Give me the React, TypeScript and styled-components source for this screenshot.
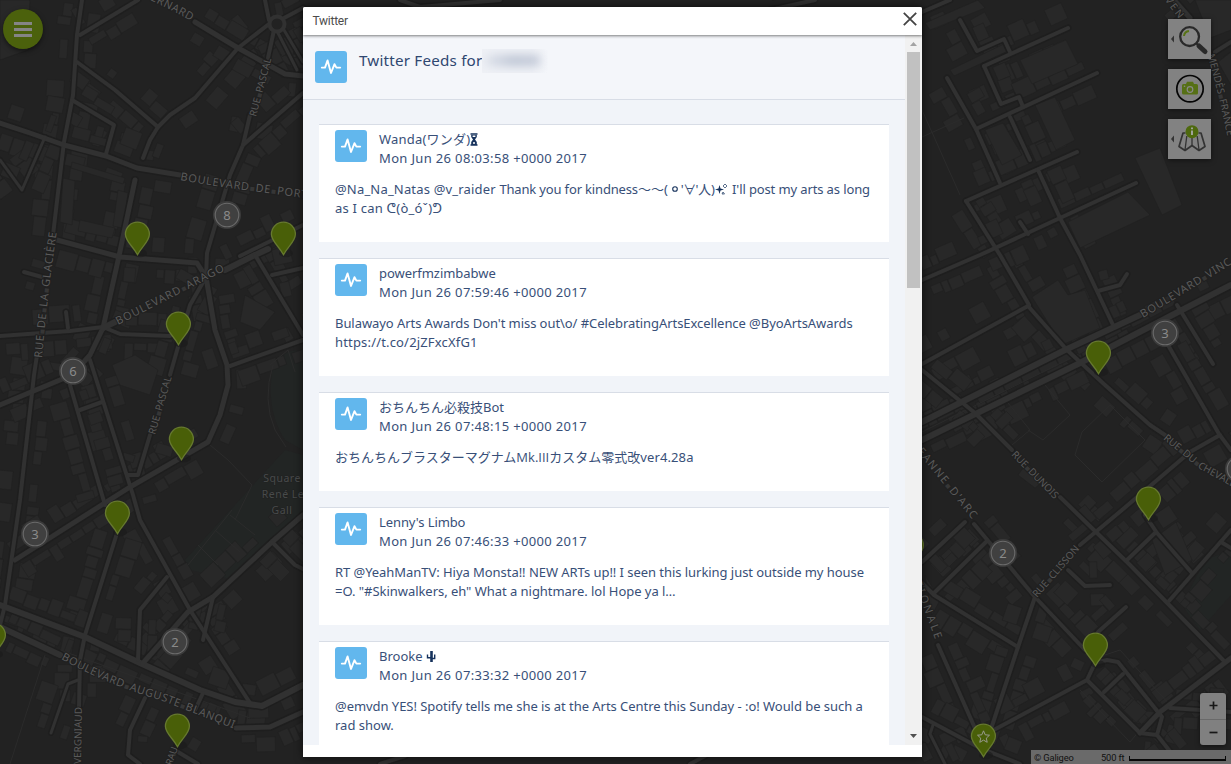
import React from "react";
import styled, { createGlobalStyle } from "styled-components";

const GlobalStyle = createGlobalStyle`
  html, body { margin: 0; padding: 0; overflow: hidden; background: #222; }
  *, *::before, *::after { box-sizing: border-box; }
`;

const Screen = styled.div`
  position: relative;
  width: 1231px;
  height: 764px;
  overflow: hidden;
  display: flex;
  justify-content: center;
  padding: 7px 6px 7px 0;
  font-family: "Noto Sans", "Noto Sans CJK JP", "DejaVu Sans", sans-serif;
`;

const MapCanvas = styled.svg`
  position: absolute;
  inset: 0;
`;

const streets: [string, number?][] = [
  ["82,0 77,35 73,95 64,142 53,235"],
  ["37,355 34,375 20,500 5,605 0,625"],
  ["80,35 138,0"],
  ["77,62 115,90 158,127"],
  ["72,100 114,125 106,154"],
  ["0,123 30,133 64,145 106,156 137,168 180,175", 5],
  ["143,158 150,140 158,127 170,115 195,98 238,48 269,24"],
  ["195,22 238,48 285,74 303,76", 5],
  ["274,30 268,58"],
  ["250,115 243,145 230,175 207,253 206,277"],
  ["243,145 303,93"],
  ["265,0 269,20"],
  ["284,18 303,8"],
  ["277,31 297,70", 3],
  ["284,30 303,62", 3],
  ["135,180 119,256 103,328 90,355 72,375 0,405", 5],
  ["57,240 120,257 197,263 206,277 215,330 227,365 228,385 220,415 208,442 130,487 15,560", 5],
  ["240,256 303,225"],
  ["0,336 70,331 103,327 120,334 170,336"],
  ["103,328 115,322", 6],
  ["225,270 255,255 268,249", 6],
  ["206,277 190,305 170,375"],
  ["255,255 303,335"],
  ["272,275 303,268"],
  ["230,366 303,340"],
  ["90,360 133,495 140,520 190,610 250,703"],
  ["70,385 105,505"],
  ["80,410 102,402"],
  ["66,312 68,328"],
  ["24,272 42,277"],
  ["150,435 138,475 128,475"],
  ["118,530 85,635 80,660 79,708"],
  ["0,605 85,637 140,663 200,690 235,702 262,706 303,685", 6],
  ["0,627 60,655", 6],
  ["236,728 270,727 303,712", 5],
  ["143,663 188,612 213,597 272,542 303,515", 5],
  ["138,660 140,610 167,577"],
  ["213,597 203,640"],
  ["272,542 295,565 303,569"],
  ["145,698 130,730 128,755 140,764"],
  ["203,693 195,710"],
  ["178,752 198,764"],
  ["78,680 68,684 51,733", 3],
  ["0,160 22,190 45,137", 3],
  ["922,12 950,0"],
  ["960,20 977,51 1004,39 1010,52"],
  ["984,66 1068,28"],
  ["984,66 1001,104 1019,97 1023,107"],
  ["947,78 976,129 1000,183"],
  ["976,129 1097,73"],
  ["1010,117 1030,160"],
  ["966,201 1077,152"],
  ["966,201 1000,255 1029,305"],
  ["922,280 980,255 1060,218 1136,183"],
  ["1038,170 1060,218 1080,255 1113,325"],
  ["1020,222 1028,234"],
  ["1174,0 1190,18", 5],
  ["1215,52 1231,42"],
  ["922,364 1028,306 1067,350 1105,385 1150,425 1165,435"],
  ["1098,291 1120,285 1127,274"],
  ["922,422 1065,350 1140,315", 6],
  ["922,440 1078,364 1180,311 1231,285", 6],
  ["1177,305 1213,364"],
  ["922,370 975,413 1012,450"],
  ["1060,497 1096,532 1130,565 1225,662"],
  ["1168,345 1219,434 1231,450"],
  ["1220,435 1190,452 1122,510 1080,545"],
  ["974,524 1035,597 1085,650"],
  ["922,562 965,522"],
  ["934,593 987,541"],
  ["922,583 934,595 1018,647"],
  ["1035,597 1018,647 990,732"],
  ["938,645 978,735"],
  ["990,732 1087,680 1095,663 1107,660 1118,662 1162,717 1157,735 1140,733 1087,680"],
  ["1104,692 1123,674"],
  ["1140,733 1160,712 1231,658", 5],
  ["1145,515 1157,533 1192,573"],
  ["1169,601 1231,530"],
  ["1127,560 1155,533"],
  ["1221,542 1231,548"],
  ["1068,570 1085,586 1110,585"],
  ["1098,632 1126,607"],
  ["922,717 980,748 1020,764"],
  ["933,725 930,734 945,764", 3],
  ["1170,708 1231,712"],
  ["1157,735 1180,764"],
  ["400,0 420,7 500,0"],
  ["770,10 815,0"],
  ["380,764 405,756"],
  ["690,764 705,756"],
];

/* Blocks of houses that stand at either side of a street. */
const houses: string[] = [];
let seed = 11;
const rnd = () => ((seed = (seed * 16807) % 2147483647) / 2147483647);
streets.forEach(([line]) => {
  const p = line.split(" ").map((s) => s.split(",").map(Number));
  for (let i = 1; i < p.length; i++) {
    const [ax, ay] = p[i - 1];
    const dx = p[i][0] - ax;
    const dy = p[i][1] - ay;
    const len = Math.hypot(dx, dy);
    const ux = dx / len;
    const uy = dy / len;
    for (const side of [-1, 1]) {
      let t = 5;
      while (t < len - 12) {
        const w = 6 + rnd() * 15;
        const d0 = 7 + rnd() * 3;
        const d1 = d0 + 7 + rnd() * 11;
        if (rnd() > 0.22) {
          const at = (a: number, d: number) =>
            `${(ax + ux * a - uy * d * side).toFixed(1)},${(ay + uy * a + ux * d * side).toFixed(1)}`;
          houses.push([at(t, d0), at(t + w, d0), at(t + w, d1), at(t, d1)].join(" "));
        }
        t += w + 0.8;
      }
    }
  }
});

const largeBlocks = [
  "63,178 75,181 72,225 60,222", "72,162 125,178 123,184 71,168", "118,190 128,193 123,228 113,226",
  "80,220 115,228 112,238 78,231", "112,365 135,355 158,370 150,395 120,385", "245,295 275,312 260,330 240,322",
  "1032,297 1058,280 1068,295 1085,290 1100,328 1062,345", "985,130 1003,123 1022,155 1002,165",
  "1035,105 1055,97 1075,140 1056,150", "1135,158 1160,148 1182,205 1162,215", "1068,222 1128,192 1150,215 1080,248",
  "950,70 1008,42 1010,50 954,76", "925,23 978,0 985,8 930,30", "1020,60 1066,40 1078,64 1032,84",
  "1018,475 1027,463 1045,480 1035,488", "1195,0 1231,0 1231,30 1210,38", "1218,62 1231,52 1231,85",
  "0,0 30,0 28,50 0,60", "1152,540 1176,522 1192,560 1165,575", "925,575 940,600 932,615",
];

const labels: { d: string; text: string; length: number; size?: number }[] = [
  { d: "M150,0 Q172,10 193,22", text: "ERNARD", length: 46 },
  { d: "M180,180 Q225,188 260,192 L320,200", text: "BOULEVARD▪DE▪PORT", length: 128 },
  { d: "M256,117 L272,57", text: "RUE▪PASCAL", length: 60, size: 10 },
  { d: "M42,358 Q48,290 57,230", text: "RUE▪DE▪LA▪GLACIÈRE", length: 126 },
  { d: "M118,325 L228,269", text: "BOULEVARD▪ARAGO", length: 120 },
  { d: "M155,435 L172,376", text: "RUE▪PASCAL", length: 60, size: 10 },
  { d: "M61,659 Q110,686 160,700 L235,729", text: "BOULEVARD▪AUGUSTE▪BLANQUI", length: 186 },
  { d: "M81,764 L82,706", text: "VERGNIAUD", length: 57, size: 10 },
  { d: "M172,766 L179,745", text: "RAU", length: 19, size: 10 },
  { d: "M1160,-7 Q1170,8 1180,20", text: "AVEN", length: 32, size: 10 },
  { d: "M1206,50 Q1218,90 1228,140", text: "▪MENDÈS▪FRANCE", length: 89, size: 10 },
  { d: "M1143,318 Q1190,290 1235,262", text: "BOULEVARD▪VINC", length: 104 },
  { d: "M1011,455 L1055,500", text: "RUE▪DUNOIS", length: 62, size: 10 },
  { d: "M1163,439 L1200,469 L1240,491", text: "RUE▪DU▪CHEVALE", length: 86, size: 10 },
  { d: "M914,448 L975,523", text: "JEANNE▪D'ARC", length: 92, size: 11 },
  { d: "M1037,598 L1080,549", text: "RUE▪CLISSON", length: 65, size: 10 },
  { d: "M914,582 Q926,615 936,642", text: "TIONALE", length: 61, size: 11 },
];

const pins = [
  [137, 222], [283, 222], [178, 312], [181, 427], [117, 501], [-7, 623],
  [177, 714], [1098, 341], [1148, 487], [1095, 633], [983, 724], [911, 533],
];
const clusters: [number, number, string][] = [
  [227, 215, "8"], [73, 371, "6"], [35, 534, "3"], [175, 642, "2"], [1165, 333, "3"], [1003, 553, "2"], [1239, 469, ""],
];

function CityMap() {
  return (
    <MapCanvas width="1231" height="764" viewBox="0 0 1231 764">
      <rect width="1231" height="764" fill="#222" />
      <path d="M273,365 Q290,345 303,352 V450 L285,440 Q265,410 273,365Z M285,450 L303,455 V515 L235,580 L190,570 L185,560Z M1205,560 L1231,550 V595 L1200,630 L1182,605Z" fill="#222524" />
      <g fill="#282828" stroke="#202020" strokeWidth=".6">
        {houses.map((h, i) => <polygon key={i} points={h} />)}
        {largeBlocks.map((h, i) => <polygon key={i} points={h} />)}
      </g>
      <path
        d="M273,365 Q262,400 275,430 L286,447 M270,365 L288,350 L295,372 M210,445 L228,460 L252,485 L235,520 M188,565 L232,510 M198,545 L218,565 M215,530 L240,552 M230,515 L255,535 M922,137 L964,118 M922,110 L960,195 M922,432 L1075,356 M1008,403 L1030,430 L1012,445 M1045,385 L1070,415 L1043,440 L1028,430 M1082,432 L1110,405 L1145,440 L1102,482 L1075,455Z M60,650 L250,718 M45,655 L10,764 M1080,690 L1130,742 L1140,730 M1105,655 L1120,650 L1170,705"
        fill="none" stroke="#2b2b2b" strokeWidth="1"
      />
      <g fill="none" strokeLinejoin="round" strokeLinecap="round">
        {streets.map(([p, w = 4], i) => <polyline key={i} points={p} stroke="#1e1e1e" strokeWidth={w + 3} />)}
        {streets.map(([p, w = 4], i) => <polyline key={i} points={p} stroke="#313131" strokeWidth={w} />)}
        <circle cx="277" cy="24" r="7.5" stroke="#313131" strokeWidth="4" fill="#222" />
      </g>
      <g fill="#5a5a5a" stroke="#202020" strokeWidth="2" paintOrder="stroke" fontFamily="Noto Sans, DejaVu Sans, sans-serif">
        {labels.map((l, i) => (
          <React.Fragment key={i}>
            <path id={`way${i}`} d={l.d} fill="none" stroke="none" />
            <text fontSize={l.size ?? 11}>
              <textPath href={`#way${i}`} textLength={l.length}>
                {l.text.split(/(▪)/).map((part, k) => (part === "▪" ? <tspan key={k} fill="#363636" fontSize="8">▪</tspan> : part))}
              </textPath>
            </text>
          </React.Fragment>
        ))}
        <g fill="#484b4b" fontSize="10.5" textAnchor="middle" letterSpacing=".5" strokeWidth="1">
          <text x="282" y="482">Square</text>
          <text x="283" y="498">René Le</text>
          <text x="282" y="514">Gall</text>
        </g>
      </g>
      {clusters.map(([x, y, n]) => (
        <g key={`${x}-${y}`}>
          <circle cx={x} cy={y} r="14" fill="#3b3b3b" />
          <circle cx={x} cy={y} r="11.8" fill="#404040" stroke="#6b6b6b" strokeWidth="1.1" />
          {n && <text x={x} y={y + 4.9} textAnchor="middle" fill="#8a8a8a" fontFamily="Noto Sans, sans-serif" fontSize="13">{n}</text>}
        </g>
      ))}
      {pins.map(([x, y]) => (
        <g key={`${x}-${y}`} transform={`translate(${x} ${y + 0.2})`}>
          <ellipse cx="3" cy="31" rx="7" ry="4" fill="#1b1b1b" opacity=".6" />
          <path d="M.5,32.5 C-4,24 -11.6,19 -11.6,12 A12,12 0 0 1 12.4,12 C12.4,19 5,24 .5,32.5Z" fill="#495f08" stroke="#66792f" strokeWidth="1.3" />
        </g>
      ))}
      <path d="M983.5,730.8 l1.7,4 4.3,.4 -3.2,2.9 .9,4.2 -3.7,-2.2 -3.7,2.2 .9,-4.2 -3.2,-2.9 4.3,-.4Z" fill="#495f08" stroke="#999b8e" strokeWidth="1" />
    </MapCanvas>
  );
}

const MenuButton = styled.div`
  position: absolute;
  left: 3px;
  top: 9px;
  width: 40px;
  height: 40px;
  border-radius: 50%;
  background: #4b610c;
  box-shadow: 0 2px 5px rgba(0, 0, 0, 0.5);
  display: flex;
  flex-direction: column;
  align-items: center;
  justify-content: center;
  gap: 3px;
`;
const MenuBar = styled.i`
  width: 18px;
  height: 3px;
  background: #858585;
`;

const ToolStack = styled.div`
  position: absolute;
  right: 20px;
  top: 19px;
  display: flex;
  flex-direction: column;
  gap: 10px;
`;
const ToolButton = styled.div`
  width: 43px;
  height: 40px;
  background: #828282;
  box-shadow: 0 1px 5px rgba(0, 0, 0, 0.55);
`;

const ZoomControl = styled.div`
  position: absolute;
  right: 5px;
  bottom: 19px;
  width: 26px;
  height: 52px;
  border-radius: 3px;
  background: #808080;
  box-shadow: 0 1px 5px rgba(0, 0, 0, 0.5);
  display: flex;
  flex-direction: column;
`;
const ZoomKey = styled.div`
  flex: 1;
  display: flex;
  align-items: center;
  justify-content: center;
  & + & { border-top: 1px solid #696969; }
`;

const Attribution = styled.div`
  position: absolute;
  right: 0;
  bottom: 0;
  width: 200px;
  height: 14px;
  padding: 0 5px 0 3px;
  background: #6a6a6a;
  color: #111;
  display: flex;
  align-items: center;
  font: 9.3px/15px Roboto, sans-serif;
  letter-spacing: -0.15px;
`;
const Owner = styled.span`
  width: 67px;
`;
const ScaleText = styled.span`
  width: 28px;
  white-space: nowrap;
`;
const ScaleBar = styled.span`
  width: 97px;
  height: 5px;
  margin-top: 3px;
  border: solid #080808;
  border-width: 0 1px 2px;
`;

const Dialog = styled.section`
  position: relative;
  width: 619px;
  height: 750px;
  background: #fff;
  border-radius: 2px 2px 0 0;
  box-shadow: 0 0 9px rgba(0, 0, 0, 0.65);
  display: flex;
  flex-direction: column;
  padding-bottom: 12px;
`;
const TitleBar = styled.header`
  position: relative;
  z-index: 1;
  height: 28px;
  flex: none;
  padding: 0 5.5px 4px 9.5px;
  background: #fff;
  border-radius: 2px 2px 0 0;
  box-shadow: 0 1px 3px rgba(0, 0, 0, 0.5);
  display: flex;
  align-items: center;
  justify-content: space-between;
  font: 12px/16px Roboto, sans-serif;
  color: #4c4c4c;
`;
const DialogTitle = styled.span`
  padding-top: 3px;
  letter-spacing: -0.25px;
`;
const Viewport = styled.div`
  flex: 1;
  min-height: 0;
  display: flex;
`;
const Feed = styled.main`
  width: 602px;
  overflow: hidden;
  background: #f1f4f9;
  color: #16325c;
`;
const FeedHeader = styled.div`
  height: 65px;
  padding: 16px 12px;
  display: flex;
  gap: 12px;
  background: #f4f6fa;
  border-bottom: 1px solid #d8dde6;
`;
const Heading = styled.h1`
  margin: -3px 0 0;
  font-size: 15.2px;
  line-height: 24px;
  font-weight: 400;
  letter-spacing: 0.2px;
  color: #2f4770;
  width: 123px;
  white-space: nowrap;
`;
const HiddenName = styled.span`
  width: 66px;
  height: 24px;
  margin: -2px 0 0 -12px;
  overflow: hidden;
  background: linear-gradient(90deg, #eff1f6 75%, #f4f6fa);
  display: flex;
  align-items: center;
  &::before {
    content: "";
    width: 54px;
    height: 11px;
    margin: -2px 0 0 4px;
    background: linear-gradient(90deg, #dde1ea, #bcc4d3 50%, #c3cad8);
    filter: blur(5px);
  }
`;
const PulseTile = styled.span`
  width: 32px;
  height: 32px;
  flex: none;
  border-radius: 3px;
  background: #62b7ed;
`;
const PostList = styled.div`
  padding: 24px 16px;
  display: flex;
  flex-direction: column;
  gap: 16px;
`;
const Card = styled.article<{ $lines: number }>`
  height: ${(p) => 80 + 19 * p.$lines}px;
  flex: none;
  padding: 5px 16px;
  background: #fff;
  border-top: 1px solid #d8dde6;
  font-size: 13px;
  line-height: 19px;
  color: #384f78;
`;
const CardHead = styled.div`
  display: flex;
  gap: 12px;
  height: 38px;
`;
const Line = styled.div<{ $tracking?: number }>`
  height: 19px;
  letter-spacing: ${(p) => p.$tracking ?? 0}px;
  white-space: nowrap;
`;
const Tracked = styled.span<{ $by: number }>`
  letter-spacing: ${(p) => p.$by}px;
`;
const Plain = styled.span`
  font-family: "Open Sans", sans-serif;
`;
const Body = styled.div`
  margin-top: 12px;
`;
const Glyph = styled.svg`
  vertical-align: -2px;
`;

const ScrollTrack = styled.div`
  width: 17px;
  background: #f1f1f1;
  display: flex;
  flex-direction: column;
  align-items: center;
  padding-top: 17px;
  position: relative;
`;
const Thumb = styled.i`
  width: 13px;
  height: 236px;
  background: #c1c1c1;
`;
const Arrow = styled.svg<{ $top?: boolean }>`
  position: absolute;
  left: 0;
  ${(p) => (p.$top ? "top: 0;" : "bottom: 0;")}
`;

const Pulse = () => (
  <PulseTile>
    <svg width="32" height="32" viewBox="0 0 32 32">
      <path d="M6.8,16.6 H10 L12.6,9.4 L16,22 L19.5,13.2 L21.4,16.6 H25.2" fill="none" stroke="#fff" strokeWidth="1.9" strokeLinecap="round" strokeLinejoin="round" />
    </svg>
  </PulseTile>
);

const Hourglass = () => (
  <Glyph width="8" height="13" viewBox="0 0 8 13">
    <path d="M.5,1 H7.5 M.5,12 H7.5" stroke="#16325c" strokeWidth="1.6" />
    <path d="M1.2,2 H6.8 V4 L5,6.5 L6.8,9 V12 H1.2 V9 L3,6.5 L1.2,4Z M2.6,2.6 V4 H5.4 V2.6Z M3,9.2 V10.8 H5 V9.2Z" fill="#16325c" fillRule="evenodd" />
  </Glyph>
);
const Ring = () => (
  <Glyph width="13" height="13" viewBox="0 0 13 13">
    <circle cx="7" cy="6" r="2.3" fill="none" stroke="#16325c" strokeWidth="1.1" />
  </Glyph>
);
const Sparkles = () => (
  <Glyph width="14" height="13" viewBox="0 0 14 13">
    <path d="M4.5,2 L5.5,5.5 L9,6.5 L5.5,7.5 L4.5,11 L3.5,7.5 L0,6.5 L3.5,5.5Z" fill="#16325c" />
    <path d="M10,1 L12,3 L10,5 L8,3Z M8,9 L9.5,11 H7Z" fill="none" stroke="#16325c" strokeWidth=".7" />
  </Glyph>
);
const Cactus = () => (
  <Glyph width="10" height="13" viewBox="0 0 10 13">
    <path d="M5.5,1 V12" fill="none" stroke="#16325c" strokeWidth="2.6" />
    <path d="M1.5,4.5 V7.8 H5 M5,8.5 H8.7 V4.5" fill="none" stroke="#16325c" strokeWidth="1.4" />
  </Glyph>
);

type Post = { name: React.ReactNode; date: string; body: [React.ReactNode, number][]; nameTracking?: number };
const posts: Post[] = [
  {
    name: <>Wanda(ワンダ)<Hourglass /></>,
    nameTracking: 0.2,
    date: "Mon Jun 26 08:03:58 +0000 2017",
    body: [
      [
        <>
          <Tracked $by={0.18}>@Na_Na_Natas @v_raider </Tracked>
          <Tracked $by={-0.16}>Thank you for kindness</Tracked>
          〜〜(<Ring /><Tracked $by={-0.6}>'∀'</Tracked>人)<Sparkles />
          <Tracked $by={-0.12}> I'll post my arts as long</Tracked>
        </>,
        0,
      ],
      [<>as I can ᕦ(ò_óˇ)ᕤ</>, 0.22],
    ],
  },
  {
    name: "powerfmzimbabwe",
    nameTracking: -0.04,
    date: "Mon Jun 26 07:59:46 +0000 2017",
    body: [["Bulawayo Arts Awards Don't miss out\\o/ #CelebratingArtsExcellence @ByoArtsAwards", -0.063], ["https://t.co/2jZFxcXfG1", 0.17]],
  },
  {
    name: "おちんちん必殺技Bot",
    date: "Mon Jun 26 07:48:15 +0000 2017",
    body: [[<>おちんちんブラスターマグナム<Plain>Mk.III</Plain>カスタム零式改<Tracked $by={0.12}>ver4.28a</Tracked></>, 0]],
  },
  {
    name: "Lenny's Limbo",
    nameTracking: -0.1,
    date: "Mon Jun 26 07:46:33 +0000 2017",
    body: [["RT @YeahManTV: Hiya Monsta!! NEW ARTs up!! I seen this lurking just outside my house", -0.05], ["=O. \"#Skinwalkers, eh\" What a nightmare. lol Hope ya l…", -0.04]],
  },
  {
    name: <>Brooke <Cactus /></>,
    date: "Mon Jun 26 07:33:32 +0000 2017",
    body: [["@emvdn YES! Spotify tells me she is at the Arts Centre this Sunday - :o! Would be such a", -0.045], ["rad show.", 0]],
  },
];

export default function App() {
  return (
    <Screen>
      <GlobalStyle />
      <CityMap />
      <MenuButton><MenuBar /><MenuBar /><MenuBar /></MenuButton>
      <ToolStack>
        <ToolButton>
          <svg width="43" height="40" viewBox="0 0 43 40">
            <path d="M6,16.5 V23.5 L3,20Z" fill="#333" />
            <circle cx="21.6" cy="17.6" r="9.4" fill="#888" stroke="#292929" strokeWidth="2.3" />
            <path d="M16,17 Q16.5,12.5 21,12" fill="none" stroke="#587315" strokeWidth="2" />
            <path d="M28.5,24.5 L31,27" stroke="#292929" strokeWidth="2" />
            <path d="M31,27 L37,32.5" stroke="#292929" strokeWidth="5" strokeLinecap="round" />
          </svg>
        </ToolButton>
        <ToolButton>
          <svg width="43" height="40" viewBox="0 0 43 40">
            <circle cx="22" cy="19.7" r="13.2" fill="none" stroke="#050505" strokeWidth="1.7" />
            <path d="M15.5,15 H18 L19,12.7 H25 L26,15 H28.5 Q30,15 30,16.5 V24 Q30,25.5 28.5,25.5 H15.5 Q14,25.5 14,24 V16.5 Q14,15 15.5,15Z" fill="#567015" />
            <circle cx="22" cy="20.5" r="2.8" fill="none" stroke="#898989" strokeWidth="1.2" />
            <circle cx="16.5" cy="17.2" r=".8" fill="#898989" />
          </svg>
        </ToolButton>
        <ToolButton>
          <svg width="43" height="40" viewBox="0 0 43 40">
            <path d="M6,16.5 V23.5 L3,20Z" fill="#333" />
            <path d="M17.5,14 H15 L11,27.5 L17,31.5 L24,26.5 L31,31.5 L37,27.5 L33,14 H30.5" fill="none" stroke="#333" strokeWidth="1.7" strokeLinejoin="round" />
            <path d="M18.8,17 L17,31 M29.2,17 L31,31 M24,19 V26.5" fill="none" stroke="#333" strokeWidth="1.3" />
            <circle cx="24" cy="12.7" r="6.5" fill="#4e690e" />
            <path d="M24,11.5 V16 M24,8.6 V10.2" stroke="#aaa" strokeWidth="1.8" />
          </svg>
        </ToolButton>
      </ToolStack>
      <ZoomControl>
        <ZoomKey><svg width="9" height="9"><path d="M.5,4.5 H8.5 M4.5,.5 V8.5" stroke="#161616" strokeWidth="1.7" /></svg></ZoomKey>
        <ZoomKey><svg width="9" height="9"><path d="M.5,4.5 H8.5" stroke="#161616" strokeWidth="1.7" /></svg></ZoomKey>
      </ZoomControl>
      <Attribution><Owner>© Galigeo</Owner><ScaleText>500 ft</ScaleText><ScaleBar /></Attribution>

      <Dialog>
        <TitleBar>
          <DialogTitle>Twitter</DialogTitle>
          <svg width="14" height="14" viewBox="0 0 14 14"><path d="M.8,.8 L13.2,13.2 M13.2,.8 L.8,13.2" stroke="#444" strokeWidth="1.8" /></svg>
        </TitleBar>
        <Viewport>
          <Feed>
            <FeedHeader>
              <Pulse />
              <Heading>Twitter Feeds for</Heading>
              <HiddenName />
            </FeedHeader>
            <PostList>
              {posts.map((p) => (
                <Card key={p.date} $lines={p.body.length}>
                  <CardHead>
                    <Pulse />
                    <div>
                      <Line $tracking={p.nameTracking}>{p.name}</Line>
                      <Line $tracking={0.345}>{p.date}</Line>
                    </div>
                  </CardHead>
                  <Body>
                    {p.body.map(([text, tracking], i) => <Line key={i} $tracking={tracking}>{text}</Line>)}
                  </Body>
                </Card>
              ))}
            </PostList>
          </Feed>
          <ScrollTrack>
            <Arrow $top width="17" height="17"><path d="M5,11 L8.5,7 L12,11Z" fill="#a3a3a3" /></Arrow>
            <Thumb />
            <Arrow width="17" height="17"><path d="M5,6 L8.5,10 L12,6Z" fill="#505050" /></Arrow>
          </ScrollTrack>
        </Viewport>
      </Dialog>
    </Screen>
  );
}
